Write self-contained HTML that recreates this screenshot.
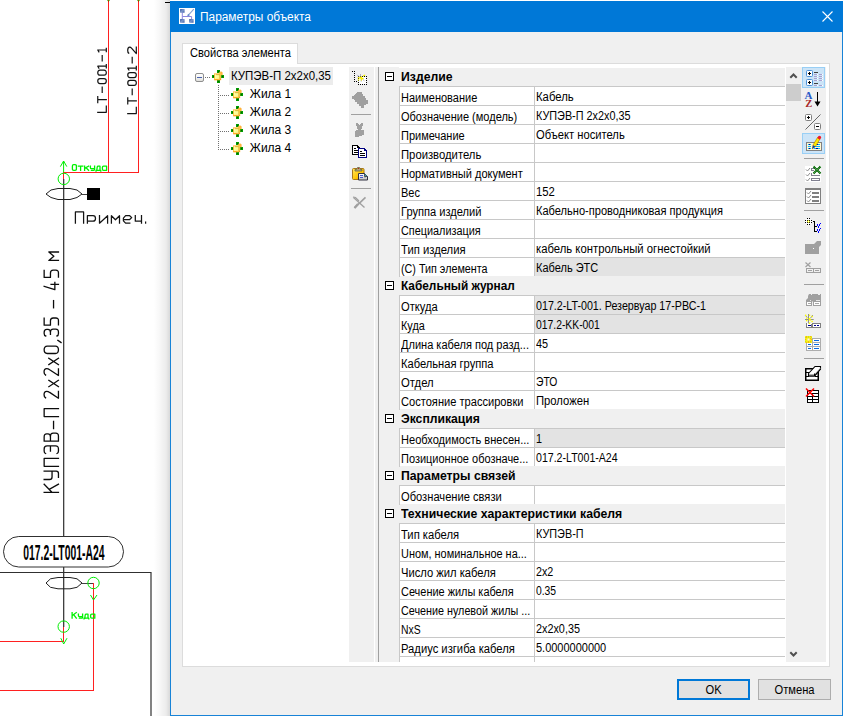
<!DOCTYPE html>
<html><head><meta charset="utf-8"><title>Параметры объекта</title>
<style>
html,body{margin:0;padding:0;}
body{width:843px;height:716px;overflow:hidden;background:#fff;position:relative;font-family:"Liberation Sans",sans-serif;font-size:12px;color:#000;}
.abs{position:absolute;}
#cad{position:absolute;left:0;top:0;width:843px;height:716px;}
#shadow{position:absolute;left:154px;top:0;width:16px;height:716px;background:linear-gradient(to right,rgba(0,0,0,0),rgba(0,0,0,0.035) 40%,rgba(0,0,0,0.075) 75%,rgba(0,0,0,0.15));}
#dlg{position:absolute;left:170px;top:1px;width:673px;height:715px;background:#f0f0f0;box-sizing:border-box;border:1px solid #1883d7;border-top:none;}
#title{position:absolute;left:170px;top:1px;width:673px;height:31px;background:#0078d7;}
#ttext{position:absolute;left:200px;top:10px;transform:scaleX(0.99);font-size:12px;color:#fff;white-space:pre;line-height:15px;transform-origin:0 0;}
#panel{position:absolute;left:182px;top:63px;width:648px;height:604px;box-sizing:border-box;background:#fff;border:1px solid #dcdcdc;}
#tab{position:absolute;left:182px;top:43px;width:116px;height:21px;box-sizing:border-box;background:#fff;border:1px solid #dcdcdc;border-bottom:none;}
#tabt{position:absolute;left:189.6px;top:46px;font-size:12px;line-height:15px;white-space:pre;transform-origin:0 0;transform:scaleX(0.925);}
.tt{position:absolute;font-size:12px;line-height:15px;white-space:pre;transform-origin:0 0;transform:scaleX(0.94);}
#lbar{position:absolute;left:349px;top:67px;width:25px;height:595px;background:#f0f0f0;}
#split{position:absolute;left:378px;top:67px;width:1px;height:595px;background:#a0a0a0;}
#grid{position:absolute;left:0;top:0;}
#gbg{position:absolute;left:379px;top:67px;width:406px;height:595px;background:#fff;}
#gmargin{position:absolute;left:379px;top:67px;width:20px;height:595px;background:#f0f0f0;}
#gvl1{position:absolute;left:399px;top:68px;width:1px;height:594px;background:#c8c8c8;}
.gh{position:absolute;left:379px;width:406px;height:19px;box-sizing:border-box;background:#f0f0f0;}
.gh:after{content:"";position:absolute;left:20px;top:18px;width:386px;height:1px;background:#c8c8c8;}
.gr.last{border-bottom-color:#f0f0f0;}
.gr.last:after{height:18px;}
.gh b{position:absolute;left:22px;top:2px;font-size:12.3px;line-height:14px;white-space:pre;font-weight:700;transform-origin:0 0;transform:scaleX(0.955);}
.pm{position:absolute;left:6px;top:4px;width:9px;height:9px;box-sizing:border-box;border:1px solid #000;background:#fff;}
.pm:after{content:"";position:absolute;left:1px;top:3px;width:5px;height:1px;background:#000;}
.gr{position:absolute;left:400px;width:385px;height:19px;box-sizing:border-box;border-bottom:1px solid #c8c8c8;}
.gl{position:absolute;left:1px;top:4px;font-size:12.3px;line-height:14px;white-space:pre;transform-origin:0 0;transform:scaleX(0.895);}
.gv{position:absolute;left:135px;top:0;width:250px;height:18px;overflow:hidden;}
.gv span{position:absolute;left:1px;top:3px;font-size:12.3px;line-height:14px;white-space:pre;transform-origin:0 0;transform:scaleX(0.895);}
.gv.g{background:#e3e3e3;}
.gr:after{content:"";position:absolute;left:134px;top:0;width:1px;height:19px;background:#c8c8c8;}
#sbar{position:absolute;left:786px;top:67px;width:15px;height:595px;background:#f0f0f0;}
#thumb{position:absolute;left:786px;top:84px;width:15px;height:17px;background:#cdcdcd;}
#rbar{position:absolute;left:801px;top:67px;width:25px;height:595px;background:#f0f0f0;}
.sel{position:absolute;left:802px;width:23px;height:21px;box-sizing:border-box;background:#cce4f7;border:1px solid #99cff5;}
.sep{position:absolute;height:1px;background:#a0a0a0;}
.btn{position:absolute;top:679px;width:73px;height:21px;box-sizing:border-box;background:#e1e1e1;border:1px solid #adadad;text-align:center;font-size:12px;line-height:21px;}
#ok{left:677px;border:2px solid #0078d7;line-height:19px;}
#cancel{left:758px;}
.btn span{display:inline-block;transform:scaleX(0.93);}
svg{position:absolute;overflow:visible;}
</style></head>
<body>
<!-- CAD background -->
<svg id="cad" width="843" height="716" viewBox="0 0 843 716" font-family="Liberation Sans, sans-serif">
 <g fill="none" stroke="#ff2020" stroke-width="1" shape-rendering="crispEdges">
  <path d="M108.5 0V172.5M138.5 0V172.5M63 172.5H139"/>
  <path d="M63.5 172V179"/>
  <path d="M63.5 627V641.5M0 641.5H64"/>
  <path d="M93.5 583V690.5M0 690.5H94"/>
 </g>
 <g fill="none" stroke="#404040" stroke-width="1">
  <path d="M63.69 179V627" stroke="#303030" stroke-width="1.22"/>
  <path d="M0 572.5H151" stroke="#303030" shape-rendering="crispEdges"/><path d="M151 572V716" stroke="#303030" stroke-width="1.2"/>
  <path d="M165 2.5H170" stroke="#000" shape-rendering="crispEdges"/>
  <path d="M46 194L51 190L58 188.5H70L77 190L82 194L77 197.5L70 199.5H58L51 197.5Z" stroke="#202020"/>
  <path d="M82 194.5H88" shape-rendering="crispEdges"/>
  <path d="M46 583L50.5 578.8L58 577.5H70L77 578.8L82 583L77 587.3L70 588.8H58L50.5 587.3Z" stroke="#202020"/>
  <path d="M82 583.5H93" shape-rendering="crispEdges"/>
 </g>
 <rect x="87" y="188" width="13" height="12" fill="#000"/>
 <rect x="3.5" y="536.5" width="120" height="30.5" rx="15.25" fill="#fff" stroke="#303030" stroke-width="1"/>
 <g fill="none" stroke="#00ee00" stroke-width="1">
  <circle cx="63.8" cy="178.9" r="5.7"/>
  <path d="M63.6 172V161M60.4 166.6L63.6 161L66.8 166.6"/>
  <circle cx="93.5" cy="583" r="5.7"/>
  <path d="M90.5 595L93.5 600L97 595"/>
  <circle cx="63.7" cy="626.6" r="5.7"/>
  <path d="M60.8 638.2L63.7 644L67 638.2"/>
 </g>
 <path d="M107 0H110L108.5 2Z" fill="#00dd00"/><rect x="108" y="0" width="1" height="2" fill="#c03000"/>
 <path d="M137 0H140L138.5 2Z" fill="#00dd00"/><rect x="138" y="0" width="1" height="2" fill="#c03000"/>
 <g fill="none" stroke="#00f200" stroke-width="1.3" stroke-linejoin="round" stroke-linecap="square"><path d="M0,-4.4Q0,-5.6 1.3,-5.6H2.7Q4,-5.6 4,-4.4V-1.2Q4,0 2.7,0H1.3Q0,0 0,-1.2Z" transform="translate(72.40,170.30)"/><path d="M0,-4.1H4.4M2.2,-4.1V0" transform="translate(78.40,170.30)"/><path d="M0,-4.1V0M4,-4.1L0.2,-2M1.4,-2.6L4,0" transform="translate(84.60,170.30)"/><path d="M0,-4.1V-2.6Q0,-1.6 1,-1.6H4.2M4.2,-4.1V-0.8Q4.2,0 3.2,0H1" transform="translate(90.40,170.30)"/><path d="M0,0.7V0H4.8V0.7M0.8,0L1.2,-3.2Q1.3,-4.1 2.2,-4.1H4V0" transform="translate(96.00,170.30)"/><path d="M0,-3Q0,-4.1 1.1,-4.1H4.2V0H1.1Q0,0 0,-1.1Z" transform="translate(102.40,170.30)"/><path d="M0,0V-5.6M4.2,-5.6L0.2,-2.6M1.5,-3.6L4.2,0" transform="translate(72.10,618.20)"/><path d="M0,-4.1V-2.6Q0,-1.6 1,-1.6H4.2M4.2,-4.1V-0.8Q4.2,0 3.2,0H1" transform="translate(78.40,618.20)"/><path d="M0,0.7V0H4.8V0.7M0.8,0L1.2,-3.2Q1.3,-4.1 2.2,-4.1H4V0" transform="translate(84.00,618.20)"/><path d="M0,-3Q0,-4.1 1.1,-4.1H4.2V0H1.1Q0,0 0,-1.1Z" transform="translate(90.60,618.20)"/></g>
 <g fill="none" stroke="#0c0c0c" stroke-width="1.3" stroke-linejoin="round" stroke-linecap="square"><path d="M0,0V-14.3M8.1,-14.3L0.3,-6.8M2.9,-9.2L8.1,0" transform="translate(58.45,492.30) rotate(-90)"/><path d="M0,-14.3V-9Q0,-6.4 2.6,-6.4H8.4M8.4,-14.3V-2.2Q8.4,0 6.2,0H2.2" transform="translate(58.45,479.50) rotate(-90)"/><path d="M0,0V-14.3H7.9V0" transform="translate(58.45,466.30) rotate(-90)"/><path d="M0,-12.9Q0.5,-14.3 2.6,-14.3H4.6Q7.6,-14.3 7.6,-11.4V-2.9Q7.6,0 4.6,0H2.6Q0.5,0 0,-1.4M2.5,-8H7.6" transform="translate(58.45,453.50) rotate(-90)"/><path d="M0,0V-14.3H4.3Q7.3,-14.3 7.3,-11.8V-10.5Q7.3,-8 4.3,-8H0M4.3,-8H5.1Q8.1,-8 8.1,-5.3V-2.7Q8.1,0 5.1,0H0" transform="translate(58.45,441.20) rotate(-90)"/><path d="M0,-4.9H7.2" transform="translate(58.45,428.60) rotate(-90)"/><path d="M0,0V-14.3H7.9V0" transform="translate(58.45,416.60) rotate(-90)"/><path d="M0.3,-12.9Q0.9,-14.4 3.4,-14.4Q6.9,-14.4 6.9,-11.8Q6.9,-10.2 5.8,-8.8L0,0H6.7" transform="translate(58.45,398.20) rotate(-90)"/><path d="M0,-9.6L6.4,0M6.4,-9.6L0,0" transform="translate(58.45,386.70) rotate(-90)"/><path d="M0.3,-12.9Q0.9,-14.4 3.4,-14.4Q6.9,-14.4 6.9,-11.8Q6.9,-10.2 5.8,-8.8L0,0H6.7" transform="translate(58.45,375.50) rotate(-90)"/><path d="M0,-9.6L6.4,0M6.4,-9.6L0,0" transform="translate(58.45,364.60) rotate(-90)"/><path d="M0,-11.2Q0,-14.3 3.65,-14.3Q7.3,-14.3 7.3,-11.2V-3.1Q7.3,0 3.65,0Q0,0 0,-3.1Z" transform="translate(58.45,353.50) rotate(-90)"/><path d="M2.2,-0.6L0,2.6" transform="translate(58.45,342.50) rotate(-90)"/><path d="M0,-12.7Q0.4,-14.3 2.6,-14.3H3.6Q6.6,-14.3 6.6,-11.7V-10.6Q6.6,-8 3.6,-8H1.6M3.6,-8H3.9Q6.9,-8 6.9,-5.3V-2.7Q6.9,0 3.9,0H2.6Q0.4,0 0,-1.5" transform="translate(58.45,336.00) rotate(-90)"/><path d="M7,-14.3H0V-8H4.4Q7.2,-8 7.2,-5.3V-2.6Q7.2,0 4.6,0H0.4" transform="translate(58.45,325.20) rotate(-90)"/><path d="M0,-4.9H7.2" transform="translate(58.45,307.80) rotate(-90)"/><path d="M3.4,-14.3L0,-3.6H7.4M5.3,-7.4V0" transform="translate(58.45,289.70) rotate(-90)"/><path d="M7,-14.3H0V-8H4.4Q7.2,-8 7.2,-5.3V-2.6Q7.2,0 4.6,0H0.4" transform="translate(58.45,277.40) rotate(-90)"/><path d="M0,0V-9.6L4.2,-4.6L8.4,-9.6V0" transform="translate(58.45,260.40) rotate(-90)"/></g>
<g fill="none" stroke="#141414" stroke-width="1.2" stroke-linejoin="round" stroke-linecap="square"><path d="M0,-8.55V0H6.3" transform="translate(106.30,112.30) rotate(-90)"/><path d="M0,-8.55H5.9M2.95,-8.55V0" transform="translate(106.30,102.60) rotate(-90)"/><path d="M0,-4.1H5.4" transform="translate(106.30,92.50) rotate(-90)"/><path d="M0,-6.3Q0,-8.55 2.5,-8.55Q5,-8.55 5,-6.3V-2.25Q5,0 2.5,0Q0,0 0,-2.25Z" transform="translate(106.30,83.60) rotate(-90)"/><path d="M0,-6.3Q0,-8.55 2.5,-8.55Q5,-8.55 5,-6.3V-2.25Q5,0 2.5,0Q0,0 0,-2.25Z" transform="translate(106.30,75.20) rotate(-90)"/><path d="M-1.9,-7.4L0,-8.55V0M-1.7,0H1.7" transform="translate(106.30,66.20) rotate(-90)"/><path d="M0,-4.1H5.4" transform="translate(106.30,61.00) rotate(-90)"/><path d="M-1.9,-7.4L0,-8.55V0M-1.7,0H1.7" transform="translate(106.30,50.00) rotate(-90)"/><path d="M0,-8.55V0H6.3" transform="translate(136.30,113.60) rotate(-90)"/><path d="M0,-8.55H5.9M2.95,-8.55V0" transform="translate(136.30,103.80) rotate(-90)"/><path d="M0,-4.1H5.4" transform="translate(136.30,94.60) rotate(-90)"/><path d="M0,-6.3Q0,-8.55 2.5,-8.55Q5,-8.55 5,-6.3V-2.25Q5,0 2.5,0Q0,0 0,-2.25Z" transform="translate(136.30,85.40) rotate(-90)"/><path d="M0,-6.3Q0,-8.55 2.5,-8.55Q5,-8.55 5,-6.3V-2.25Q5,0 2.5,0Q0,0 0,-2.25Z" transform="translate(136.30,77.60) rotate(-90)"/><path d="M-1.9,-7.4L0,-8.55V0M-1.7,0H1.7" transform="translate(136.30,68.10) rotate(-90)"/><path d="M0,-4.1H5.4" transform="translate(136.30,62.80) rotate(-90)"/><path d="M0.3,-7.6Q0.8,-8.6 3.1,-8.6Q6.4,-8.6 6.4,-6.6Q6.4,-5.6 5.4,-4.8L0,0H6.5" transform="translate(136.30,53.60) rotate(-90)"/></g>
<g fill="none" stroke="#141414" stroke-width="1.25" stroke-linejoin="round" stroke-linecap="square"><path d="M0,0V-11.3H8.2V0" transform="translate(75.40,223.20)"/><path d="M0,0V-7.5H5.6Q8.1,-7.5 8.1,-4.75Q8.1,-2 5.6,-2H0" transform="translate(87.40,223.20)"/><path d="M0,-7.5V0L8.1,-7.5V0" transform="translate(99.50,223.20)"/><path d="M0,0V-7.5L4.05,-3.4L8.1,-7.5V0" transform="translate(111.40,223.20)"/><path d="M0,-3.7H6.3L8.3,-5.6L6.3,-7.5H2.2L0,-5V-2.4L2.2,0H6.4" transform="translate(123.40,223.20)"/><path d="M0,-7.5V-2H6.2M6.2,-7.5V0" transform="translate(135.30,223.20)"/><path d="M0,-1.1V-0.1" transform="translate(145.60,223.20)"/></g>
 <text transform="translate(23.3,559.8) scale(0.483,1)" font-size="21.5" font-weight="700" fill="#000">017.2-LT001-A24</text>
</svg>
<div id="shadow"></div>

<!-- Dialog -->
<div id="dlg"></div>
<div id="title"></div>
<svg class="abs" style="left:179px;top:8px" width="16" height="16" viewBox="0 0 16 16">
 <defs><linearGradient id="tb" x1="0" y1="0" x2="1" y2="1"><stop offset="0" stop-color="#34549c"/><stop offset="0.5" stop-color="#7c98cc"/><stop offset="1" stop-color="#3c5ca4"/></linearGradient></defs>
 <rect x="0" y="0" width="16" height="16" fill="#fff"/>
 <path d="M3.3 4.5V8.5H12.6V11.2M3.3 8.5V11.2" fill="none" stroke="#8c86e0" stroke-width="1"/>
 <path d="M14.8 1.2L9.2 7.4" stroke="#86a0d0" stroke-width="1.1" fill="none"/>
 <path d="M8.2 8.3L9 5.8L10.8 7.5Z" fill="#5c84c4"/>
 <rect x="1" y="1.1" width="4.6" height="3.7" rx="0.5" fill="url(#tb)"/>
 <rect x="1" y="11" width="4.6" height="3.8" rx="0.5" fill="url(#tb)"/>
 <rect x="10.1" y="11" width="4.5" height="3.8" rx="0.5" fill="url(#tb)"/>
</svg>
<div id="ttext">Параметры объекта</div>
<svg class="abs" style="left:822px;top:11px" width="11" height="11" viewBox="0 0 11 11"><path d="M0.5 0.5L10.5 10.5M10.5 0.5L0.5 10.5" stroke="#fff" stroke-width="1.1" fill="none"/></svg>

<div id="panel"></div>
<div id="tab"></div>
<div id="tabt">Свойства элемента</div>

<!-- Tree -->
<svg class="abs" style="left:183px;top:64px" width="166" height="100" viewBox="183 64 166 100">
 <defs><linearGradient id="bx" x1="0" y1="0" x2="0" y2="1"><stop offset="0" stop-color="#ffffff"/><stop offset="0.5" stop-color="#f4f4f2"/><stop offset="1" stop-color="#dcdcd8"/></linearGradient></defs>
 <g stroke="#707070" stroke-width="1" stroke-dasharray="1 1" fill="none" shape-rendering="crispEdges">
  <path d="M205 77.5H210"/>
  <path d="M218.5 85V150"/>
  <path d="M220 95.5H229"/><path d="M220 113.5H229"/><path d="M220 131.5H229"/><path d="M220 149.5H229"/>
 </g>
 <rect x="195.5" y="73.5" width="8" height="8" rx="1.5" fill="url(#bx)" stroke="#8e8e8e"/>
 <path d="M197 77.5H202" stroke="#4a62ae" shape-rendering="crispEdges"/>
</svg>
<div class="abs" style="left:229px;top:67px;width:104px;height:18px;background:#ececec;"></div>
<div class="tt" style="left:230.8px;top:69px;transform:scaleX(0.955)">КУПЭВ-П 2x2x0,35</div>
<div class="tt" style="left:249.8px;top:87px;transform:scaleX(1)">Жила 1</div>
<div class="tt" style="left:249.8px;top:105px;transform:scaleX(1)">Жила 2</div>
<div class="tt" style="left:249.8px;top:123px;transform:scaleX(1)">Жила 3</div>
<div class="tt" style="left:249.8px;top:141px;transform:scaleX(1)">Жила 4</div>
<!--TREEICONS-->

<!-- Left toolbar -->
<div id="lbar"></div>
<div class="sep" style="left:351px;top:114px;width:20px"></div>
<div class="sep" style="left:351px;top:188px;width:20px"></div>
<!--LICONS-->

<div class="abs" style="left:375px;top:67px;width:3px;height:595px;background:#f0f0f0"></div><div id="split"></div>
<!-- Grid -->
<div id="gbg"></div><div id="gmargin"></div><div id="gvl1"></div>
<div class="abs" style="left:0;top:0;width:843px;height:662px;overflow:hidden"><div class="gh" style="top:68px"><i class="pm"></i><b style="transform:scaleX(0.9957)">Изделие</b></div>
<div class="gr" style="top:87px"><span class="gl" style="transform:scaleX(0.8950)">Наименование</span><span class="gv"><span style="transform:scaleX(0.9206)">Кабель</span></span></div>
<div class="gr" style="top:106px"><span class="gl" style="transform:scaleX(0.8950)">Обозначение (модель)</span><span class="gv"><span style="transform:scaleX(0.8808)">КУПЭВ-П 2x2x0,35</span></span></div>
<div class="gr" style="top:125px"><span class="gl" style="transform:scaleX(0.8950)">Примечание</span><span class="gv"><span style="transform:scaleX(0.9106)">Объект носитель</span></span></div>
<div class="gr" style="top:144px"><span class="gl" style="transform:scaleX(0.9171)">Производитель</span><span class="gv"></span></div>
<div class="gr" style="top:163px"><span class="gl" style="transform:scaleX(0.8965)">Нормативный документ</span><span class="gv"></span></div>
<div class="gr" style="top:182px"><span class="gl" style="transform:scaleX(0.8950)">Вес</span><span class="gv"><span style="transform:scaleX(0.9221)">152</span></span></div>
<div class="gr" style="top:201px"><span class="gl" style="transform:scaleX(0.9020)">Группа изделий</span><span class="gv"><span style="transform:scaleX(0.8999)">Кабельно-проводниковая продукция</span></span></div>
<div class="gr" style="top:220px"><span class="gl" style="transform:scaleX(0.8826)">Специализация</span><span class="gv"></span></div>
<div class="gr" style="top:239px"><span class="gl" style="transform:scaleX(0.9167)">Тип изделия</span><span class="gv"><span style="transform:scaleX(0.9190)">кабель контрольный огнестойкий</span></span></div>
<div class="gr last" style="top:258px"><span class="gl" style="transform:scaleX(0.8755)">(С) Тип элемента</span><span class="gv g"><span style="transform:scaleX(0.8950)">Кабель ЭТС</span></span></div>
<div class="gh" style="top:277px"><i class="pm"></i><b style="transform:scaleX(0.9632)">Кабельный журнал</b></div>
<div class="gr" style="top:296px"><span class="gl" style="transform:scaleX(0.9080)">Откуда</span><span class="gv g"><span style="transform:scaleX(0.8693)">017.2-LT-001. Резервуар 17-РВС-1</span></span></div>
<div class="gr" style="top:315px"><span class="gl" style="transform:scaleX(0.8834)">Куда</span><span class="gv g"><span style="transform:scaleX(0.8416)">017.2-KK-001</span></span></div>
<div class="gr" style="top:334px"><span class="gl" style="transform:scaleX(0.8971)">Длина кабеля под разд...</span><span class="gv"><span style="transform:scaleX(0.8819)">45</span></span></div>
<div class="gr" style="top:353px"><span class="gl" style="transform:scaleX(0.9060)">Кабельная группа</span><span class="gv"></span></div>
<div class="gr" style="top:372px"><span class="gl" style="transform:scaleX(0.9191)">Отдел</span><span class="gv"><span style="transform:scaleX(0.8397)">ЭТО</span></span></div>
<div class="gr last" style="top:391px"><span class="gl" style="transform:scaleX(0.9025)">Состояние трассировки</span><span class="gv"><span style="transform:scaleX(0.9148)">Проложен</span></span></div>
<div class="gh" style="top:410px"><i class="pm"></i><b style="transform:scaleX(0.9908)">Экспликация</b></div>
<div class="gr" style="top:429px"><span class="gl" style="transform:scaleX(0.8986)">Необходимость внесен...</span><span class="gv g"><span style="transform:scaleX(0.8800)">1</span></span></div>
<div class="gr last" style="top:448px"><span class="gl" style="transform:scaleX(0.8936)">Позиционное обозначе...</span><span class="gv"><span style="transform:scaleX(0.8613)">017.2-LT001-A24</span></span></div>
<div class="gh" style="top:467px"><i class="pm"></i><b style="transform:scaleX(0.9956)">Параметры связей</b></div>
<div class="gr last" style="top:486px"><span class="gl" style="transform:scaleX(0.9060)">Обозначение связи</span><span class="gv"></span></div>
<div class="gh" style="top:505px"><i class="pm"></i><b style="transform:scaleX(0.9962)">Технические характеристики кабеля</b></div>
<div class="gr" style="top:524px"><span class="gl" style="transform:scaleX(0.9127)">Тип кабеля</span><span class="gv"><span style="transform:scaleX(0.8817)">КУПЭВ-П</span></span></div>
<div class="gr" style="top:543px"><span class="gl" style="transform:scaleX(0.8878)">Uном, номинальное на...</span><span class="gv"></span></div>
<div class="gr" style="top:562px"><span class="gl" style="transform:scaleX(0.9106)">Число жил кабеля</span><span class="gv"><span style="transform:scaleX(0.8743)">2x2</span></span></div>
<div class="gr" style="top:581px"><span class="gl" style="transform:scaleX(0.8894)">Сечение жилы кабеля</span><span class="gv"><span style="transform:scaleX(0.8397)">0.35</span></span></div>
<div class="gr" style="top:600px"><span class="gl" style="transform:scaleX(0.8764)">Сечение нулевой жилы ...</span><span class="gv"></span></div>
<div class="gr" style="top:619px"><span class="gl" style="transform:scaleX(0.8441)">NxS</span><span class="gv"><span style="transform:scaleX(0.8804)">2x2x0,35</span></span></div>
<div class="gr" style="top:638px"><span class="gl" style="transform:scaleX(0.9121)">Радиус изгиба кабеля</span><span class="gv"><span style="transform:scaleX(0.8925)">5.0000000000</span></span></div>
<div class="gr" style="top:657px"><span class="gv"></span></div></div>

<!-- scrollbar -->
<div id="sbar"></div><div id="thumb"></div>
<svg class="abs" style="left:789px;top:72px" width="9" height="8" viewBox="0 0 9 8"><path d="M1.3 5.7L4.5 2.5L7.7 5.7" fill="none" stroke="#505050" stroke-width="2"/></svg>
<svg class="abs" style="left:789px;top:650px" width="9" height="8" viewBox="0 0 9 8"><path d="M1.3 2.3L4.5 5.5L7.7 2.3" fill="none" stroke="#505050" stroke-width="2"/></svg>

<!-- Right toolbar -->
<div id="rbar"></div>
<div class="sel" style="top:67px"></div>
<div class="sel" style="top:133px"></div>
<div class="sep" style="left:804px;top:158px;width:20px"></div>
<div class="sep" style="left:804px;top:210px;width:20px"></div>
<div class="sep" style="left:804px;top:284px;width:20px"></div>
<div class="sep" style="left:804px;top:358px;width:20px"></div>
<svg class="abs" style="left:0;top:0" width="843" height="716" viewBox="0 0 843 716">
<defs>
 <linearGradient id="ny" x1="0" y1="0" x2="0.6" y2="1"><stop offset="0" stop-color="#ffffd0"/><stop offset="0.55" stop-color="#ffff98"/><stop offset="1" stop-color="#ffe880"/></linearGradient>
 <g id="node">
  <g fill="#009c00"><rect x="5" y="0" width="3" height="3"/><rect x="5" y="10" width="3" height="3"/><rect x="0" y="5" width="3" height="3"/><rect x="9" y="5" width="3" height="3"/></g>
  <g fill="#005c00"><rect x="6" y="1" width="1" height="1"/><rect x="6" y="11" width="1" height="1"/><rect x="1" y="6" width="1" height="1"/><rect x="10" y="6" width="1" height="1"/></g>
  <path d="M7.6 3.6V2.2H10V5.2" fill="none" stroke="#ffa418" stroke-width="1"/>
  <path d="M8 3.6L8.6 2.4H9.8V4.8L9 5.2Z" fill="#ffb030"/>
  <rect x="2.4" y="3.8" width="6.4" height="6" fill="url(#ny)" stroke="#ffb830" stroke-width="0.8"/>
  <path d="M3.8 4.7H7.9V8.8" fill="none" stroke="#d4a410" stroke-width="0.8"/>
  <path d="M2.5 9.7H6.5" stroke="#ff9c10" stroke-width="0.9"/>
  <rect x="7.6" y="8.8" width="1.2" height="1" fill="#f08010"/>
 </g>
 <g id="pbox"><rect x="0.5" y="0.5" width="6" height="6" rx="1" fill="#fff" stroke="#808080"/><path d="M2 3.5H5M3.5 2V5" stroke="#000" shape-rendering="crispEdges"/></g>
 <g id="mbox"><rect x="0.5" y="0.5" width="6" height="6" rx="1" fill="#fff" stroke="#808080"/><path d="M2 3.5H5" stroke="#000" shape-rendering="crispEdges"/></g>
 <g id="chk"><path d="M0 1.5L1.5 3L4 0" fill="none" stroke="#808080" stroke-width="0.9"/></g>
</defs>
<!-- tree icons -->
<use href="#node" x="212" y="70"/><use href="#node" x="231" y="88"/><use href="#node" x="231" y="106"/><use href="#node" x="231" y="124"/><use href="#node" x="231" y="142"/>

<!-- L1: dotted select + star -->
<g shape-rendering="crispEdges">
 <rect x="359" y="77" width="7" height="7" fill="#fff"/>
 <path d="M352 71.5H355" stroke="#000" stroke-dasharray="1 1"/>
 <path d="M354.5 73V82" stroke="#000" stroke-dasharray="1 1"/>
 <path d="M356 81.5H358" stroke="#000" stroke-dasharray="1 1"/>
 <path d="M358 76.5H367M358 84.5H367" stroke="#000" stroke-dasharray="1 1"/>
 <path d="M358.5 76V85M366.5 76V85" stroke="#000" stroke-dasharray="1 1"/>
</g>
<g stroke="#9c9cb0" stroke-width="0.8" fill="none"><path d="M357.2 74.8L359.4 77M360.5 74V76.6M362.8 79.4L364.4 80.8M361.2 79V81.6"/></g>
<g stroke="#f6ee00" stroke-width="1.15" fill="none"><path d="M357.8 77.6L361.2 78.2M363 76L365.2 75M361.7 76.4L361.3 80.6M358 80.2L359.2 79.4M362.2 78.9L363.6 78.3M360 77L362.4 79"/></g>
<!-- L2 gray tag -->
<path d="M357 92H361L362 93V94H363V96H365V98H366V100H368V104H366V105H364V108H361V106H359V104H357V102H355V100H354V99H352V96H354V95H355V94H356V93H357Z" fill="#a0a0a0" shape-rendering="crispEdges"/>
<!-- L3 gray cut -->
<path d="M356 123H358V124H359V125H360V124H361V123H363V126H362V129H361V130H364V135H362V136H359V137H355V131H356V130H358V129H357V126H356Z" fill="#a0a0a0" shape-rendering="crispEdges"/>
<!-- L4 copy -->
<g shape-rendering="crispEdges">
 <path d="M352.5 145.5H357.5L359.5 147.5V154.5H352.5Z" fill="#fff" stroke="#000"/>
 <path d="M357.5 145.5V147.5H359.5" fill="none" stroke="#000"/>
 <path d="M354 148.5H356M354 150.5H358M354 152.5H358" stroke="#000"/>
 <path d="M358.5 148.5H364.5L366.5 150.5V157.5H358.5Z" fill="#fff" stroke="#000080"/>
 <path d="M364.5 148.5V150.5H366.5" fill="none" stroke="#000080"/>
 <path d="M360 151.5H362M360 153.5H365M360 155.5H365" stroke="#000"/>
</g>
<!-- L5 paste -->
<linearGradient id="gold" x1="0" y1="0" x2="1" y2="1"><stop offset="0" stop-color="#ffe860"/><stop offset="0.6" stop-color="#ffc400"/><stop offset="1" stop-color="#d88000"/></linearGradient>
<rect x="352.5" y="168.5" width="11.5" height="11" rx="1" fill="url(#gold)" stroke="#a87818" stroke-width="1"/>
<path d="M355 171V169.5H356.5L357.5 167.5H359.5L360.5 169.5H362V171Z" fill="#b0a878" stroke="#6a6440" stroke-width="0.8"/>
<rect x="358" y="168" width="1" height="1" fill="#c02020"/>
<linearGradient id="pg" x1="0" y1="0" x2="0" y2="1"><stop offset="0" stop-color="#ffffff"/><stop offset="1" stop-color="#c0c0c0"/></linearGradient>
<path d="M358.5 173.5H364.5L367.5 176.5V180H358.5Z" fill="url(#pg)" stroke="#303040" stroke-width="1"/>
<path d="M364.5 173.5V176.5H367.5" fill="#40a0a8" stroke="#303040" stroke-width="0.8"/>
<path d="M360 175.5H363M360 177.5H363" stroke="#4858c8" stroke-width="1" shape-rendering="crispEdges"/>
<path d="M364 177.5H366" stroke="#b0b0b0" shape-rendering="crispEdges"/>
<!-- L6 gray X -->
<path d="M353.5 197.5L364.5 207.5" stroke="#a0a0a0" stroke-width="1.3" fill="none"/>
<path d="M365.5 197.3L354.5 207.8" stroke="#a0a0a0" stroke-width="1.6" fill="none"/>
<path d="M353 197L355.5 197.5L359 201" stroke="#a0a0a0" stroke-width="1.2" fill="none"/>
<path d="M358 204L354.5 208" stroke="#a0a0a0" stroke-width="2.2" fill="none"/>

<!-- R1 categorized -->
<g>
 <rect x="806.5" y="70.5" width="6" height="6" rx="1" fill="#fff" stroke="#4a90d8"/>
 <rect x="806.5" y="79.5" width="6" height="6" rx="1" fill="#fff" stroke="#4a90d8"/>
 <path d="M808 73.5H811M809.5 72V75M808 82.5H811M809.5 81V84" stroke="#000" shape-rendering="crispEdges"/>
 <path d="M814 72.5H818M814 83.5H818" stroke="#404040" shape-rendering="crispEdges"/>
 <g stroke="#a8a0d0" shape-rendering="crispEdges"><path d="M814 74.5H817M819 74.5H822M814 76.5H817M819 76.5H822M814 78.5H817M819 78.5H822M814 80.5H817M819 80.5H822M814 85.5H817M819 85.5H822"/></g>
 <g stroke="#ffffff" shape-rendering="crispEdges"><path d="M817 74.5H818M822 74.5H823M817 76.5H818M822 76.5H823M817 78.5H818M822 78.5H823M817 80.5H818M822 80.5H823M817 85.5H818M822 85.5H823"/></g>
</g>
<!-- R2 A-Z -->
<text x="804.6" y="99.3" font-family="Liberation Serif, serif" font-weight="700" font-size="11" fill="#2858c8">A</text>
<text x="805.2" y="107.3" font-family="Liberation Serif, serif" font-weight="700" font-size="10.5" fill="#a82828">Z</text>
<path d="M817.5 92V105" stroke="#000" shape-rendering="crispEdges"/>
<path d="M814.5 101.5H820.5L817.5 106.5Z" fill="#000"/>
<!-- R3 +/- -->
<use href="#pbox" x="805" y="114"/><use href="#mbox" x="814" y="123"/>
<path d="M805.5 129.5L820.5 114.5" stroke="#686868" stroke-width="1" fill="none"/>
<!-- R4 pencil on table -->
<rect x="806.5" y="142.5" width="15" height="8" fill="#fff8d4" stroke="#808080"/>
<g shape-rendering="crispEdges"><path d="M808 144.5H811M808 146.5H811M808 148.5H811M815 144.5H820M815 146.5H820M814 148.5H820" stroke="#00b8f8"/>
<path d="M809 144.5H810M809 148.5H810M817 144.5H818M816 148.5H818" stroke="#0000a0"/></g>
<path d="M812.3 148.8L813 145L817.5 137.5L820 139L815.5 146.5Z" fill="#ffe800" stroke="#a08000" stroke-width="0.6"/>
<path d="M817.2 138L818.3 136.3Q819.5 135.3 820.7 136.3T820.6 138.8L819.8 139.8Z" fill="#f01828"/>
<path d="M812.3 149L813 145.2L815.5 146.6Z" fill="#0038c0"/>
<!-- R5 checks + excel X -->
<rect x="805" y="166" width="16" height="16" fill="#fff"/>
<use href="#chk" x="806" y="168"/><use href="#chk" x="806" y="173"/><use href="#chk" x="806" y="178"/>
<g fill="none" stroke="#808090" shape-rendering="crispEdges"><path d="M815 168.5H811.5V170.5H814"/><path d="M811.5 173V175.5H820"/><rect x="811.5" y="178.5" width="8" height="2"/></g>
<path d="M813.5 166.5L820.5 173.5M820.5 166.5L813.5 173.5" stroke="#006400" stroke-width="2" fill="none"/>
<path d="M813.5 166.5L820.5 173.5M820.5 166.5L813.5 173.5" stroke="#c8f0c8" stroke-width="0.6" stroke-dasharray="1 1" fill="none"/>
<!-- R6 list box -->
<rect x="805.5" y="188.5" width="15" height="15" fill="#fff" stroke="#808080"/>
<rect x="805" y="188" width="16" height="2" fill="#808080"/>
<use href="#chk" x="807" y="191"/><use href="#chk" x="807" y="195"/><use href="#chk" x="807" y="199"/>
<g fill="#808080"><rect x="812" y="192" width="7" height="2"/><rect x="812" y="196" width="7" height="2"/><rect x="812" y="200" width="7" height="2"/></g>
<!-- R7 yellow cross + tree -->
<g shape-rendering="crispEdges">
<rect x="806" y="219" width="5" height="5" fill="#fff"/><rect x="805" y="220" width="7" height="3" fill="#fff"/><rect x="807" y="218" width="3" height="7" fill="#fff"/>
<g fill="#ffff00"><rect x="808" y="220" width="1" height="1"/><rect x="807" y="221" width="1" height="1"/><rect x="809" y="221" width="1" height="1"/><rect x="808" y="222" width="1" height="1"/></g>
<g fill="#000"><rect x="807" y="218" width="1" height="1"/><rect x="809" y="218" width="1" height="1"/><rect x="805" y="220" width="1" height="1"/><rect x="811" y="220" width="1" height="1"/><rect x="805" y="222" width="1" height="1"/><rect x="811" y="222" width="1" height="1"/><rect x="807" y="224" width="1" height="1"/><rect x="809" y="224" width="1" height="1"/></g>
<g fill="#141438"><rect x="807" y="220" width="1" height="1"/><rect x="809" y="220" width="1" height="1"/><rect x="807" y="222" width="1" height="1"/><rect x="809" y="222" width="1" height="1"/></g>
<path d="M813 221.5H814.5V231.5H817M814.5 226.5H817" fill="none" stroke="#000"/>
<g fill="#0000ff"><rect x="817" y="224" width="1" height="1"/><rect x="817" y="225" width="1" height="1"/><rect x="818" y="226" width="1" height="1"/><rect x="818" y="227" width="1" height="1"/><rect x="819" y="224" width="1" height="1"/><rect x="819" y="225" width="1" height="1"/><rect x="820" y="223" width="1" height="1"/><rect x="817" y="229" width="1" height="1"/><rect x="817" y="230" width="1" height="1"/><rect x="818" y="231" width="1" height="1"/><rect x="818" y="232" width="1" height="1"/><rect x="819" y="229" width="1" height="1"/><rect x="819" y="230" width="1" height="1"/><rect x="820" y="228" width="1" height="1"/></g>
</g>
<!-- R8 gray folder -->
<path d="M805 244H814L817 241H821V245L819 247V254H805Z" fill="#a0a0a0"/>
<rect x="813" y="248" width="1" height="1" fill="#fff"/>
<!-- R9 gray x + boxes -->
<path d="M805.5 262.5L810.5 267M810.5 262.5L805.5 267" stroke="#a0a0a0" stroke-width="1.2" fill="none"/>
<g fill="none" stroke="#a0a0a0" shape-rendering="crispEdges"><rect x="806.5" y="268.5" width="14" height="4"/><path d="M813.5 268V273M808 270.5H812M815 270.5H819"/></g>
<!-- R10 gray -->
<path d="M809 294H821V301.5H806V300L808 298V296Z" fill="#a0a0a0"/>
<g shape-rendering="crispEdges">
<rect x="811" y="294" width="1" height="1" fill="#f0f0f0"/><rect x="818" y="294" width="2" height="1" fill="#f0f0f0"/>
<rect x="816" y="300" width="4" height="1" fill="#e8e8e8"/><rect x="810" y="300" width="1" height="1" fill="#e8e8e8"/>
<rect x="806.5" y="301.5" width="5" height="4" fill="#fff" stroke="#a0a0a0"/><rect x="813.5" y="301.5" width="7" height="4" fill="#fff" stroke="#a0a0a0"/>
<rect x="808" y="303" width="3" height="1" fill="#a8a8a8"/><rect x="815" y="303" width="4" height="1" fill="#a8a8a8"/>
</g>
<!-- R11 star + boxes -->
<g shape-rendering="crispEdges">
<rect x="807" y="323" width="5" height="4" fill="#fff"/><rect x="813" y="324" width="7" height="3" fill="#fff"/>
<path d="M806.5 323V327.5H811.5V323.5M812.5 323.5H820.5V327.5H812.5Z" fill="none" stroke="#808080"/>
<path d="M808 325.5H811M814 325.5H816M817 325.5H819" stroke="#000090"/>
</g>
<g stroke="#808088" stroke-width="0.9" fill="none"><path d="M808.5 314V323.5M805 319.5H813.7M805.3 315.5L807.3 317.5M812.8 315L810.6 318"/></g>
<g fill="#ffff00"><rect x="805" y="314.6" width="1.4" height="1.4"/><rect x="808.9" y="314.6" width="1.3" height="1.5"/><rect x="811.4" y="315.8" width="1.4" height="1.4"/><rect x="806" y="317.4" width="1.4" height="1.4"/><rect x="808.7" y="318" width="1.8" height="2.4"/><rect x="806" y="319.9" width="1.4" height="1.4"/><rect x="811.4" y="320.8" width="1.4" height="1.4"/><rect x="808.9" y="322.4" width="1.3" height="1.6"/><rect x="809.8" y="319.4" width="1.4" height="1.2"/></g>
<!-- R12 grid + star -->
<g fill="#fff" stroke="#adadad" shape-rendering="crispEdges"><rect x="806.5" y="338.5" width="14" height="12"/><path d="M806 342.5H821M806 346.5H821M812.5 338V351"/></g>
<path d="M814 340.5H819M808 344.5H811M814 344.5H819M808 348.5H811M814 348.5H819" stroke="#0868e0" shape-rendering="crispEdges"/>
<rect x="805" y="336" width="7" height="7" fill="#f6f210"/>
<g fill="#f0b020" shape-rendering="crispEdges"><rect x="806" y="336" width="1" height="1"/><rect x="810" y="336" width="1" height="1"/><rect x="805" y="339" width="1" height="1"/><rect x="811" y="339" width="1" height="1"/><rect x="806" y="342" width="1" height="1"/><rect x="810" y="341" width="1" height="1"/><rect x="808" y="341" width="1" height="2"/><rect x="806" y="337" width="1" height="1"/><rect x="810" y="338" width="1" height="1"/></g>
<g fill="#c8dc20" shape-rendering="crispEdges"><rect x="808" y="336" width="1" height="2"/><rect x="805" y="337" width="1" height="1"/><rect x="811" y="337" width="1" height="1"/><rect x="805" y="341" width="1" height="1"/><rect x="810" y="342" width="1" height="1"/></g>
<rect x="807.5" y="338.5" width="2" height="2" fill="#fff0e8"/>
<!-- R13 eraser -->
<rect x="805.75" y="368.75" width="12.5" height="11.5" fill="#fff" stroke="#000" stroke-width="1.5"/>
<path d="M806 372.5H809M806 376.5H809M815 376.5H818" stroke="#000" shape-rendering="crispEdges"/>
<path d="M808.5 373.5L815 366.5H820.5V369L814.5 376H808.5Z" fill="#fff" stroke="#000" stroke-width="1.1"/>
<path d="M809 374H814.5L820.5 367.5V369L814.5 375.8H809Z" fill="#b0b0b0"/>
<path d="M808.5 376H814.5L820.5 369" fill="none" stroke="#000" stroke-width="1.1"/>
<path d="M814.5 373.5V376" stroke="#000"/>
<!-- R14 table + red X -->
<g fill="#fff" stroke="#000" shape-rendering="crispEdges"><rect x="807.5" y="390.5" width="11" height="12"/><path d="M807 393.5H819M807 396.5H819M807 399.5H819M812.5 393V403"/></g>
<path d="M806 388.5L814 396.5M814 388.5L806 396.5" stroke="#ff0000" stroke-width="1.5" fill="none"/>
</svg>


<!-- Buttons -->
<div class="btn" id="ok"><span>OK</span></div>
<div class="btn" id="cancel"><span>Отмена</span></div>
</body></html>
